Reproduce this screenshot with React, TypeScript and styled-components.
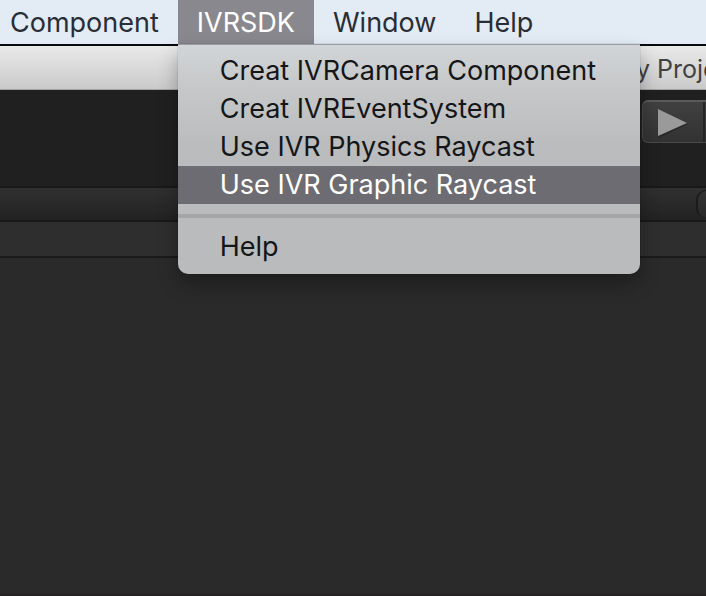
import React from "react";
import styled, { createGlobalStyle } from "styled-components";

const GlobalStyle = createGlobalStyle`
  *, *::before, *::after { box-sizing: border-box; }
  body {
    margin: 0;
    background: #2a2a2a;
    font-family: Inter, "Liberation Sans", sans-serif;
    overflow: hidden;
  }
  button { font: inherit; border: 0; margin: 0; padding: 0; background: none; }
`;

const Screen = styled.div`
  display: flex;
  flex-direction: column;
  min-height: 100vh;
  overflow: hidden;
  border-bottom: 2px solid #232122;
`;

const MenuBar = styled.nav`
  display: flex;
  height: 46px;
  background: #e3ebf4;
  border-bottom: 2px solid #08080f;
`;

const MenuSlot = styled.div`
  position: relative;
  display: flex;
`;

const MenuTitle = styled.button<{ $open?: boolean; $first?: boolean }>`
  height: 44px;
  padding: 0 19px 0 ${(p) => (p.$first ? 10 : 19)}px;
  font-size: 27px;
  line-height: 46px;
  white-space: nowrap;
  color: ${(p) => (p.$open ? "#ffffff" : "#292d35")};
  background: ${(p) => (p.$open ? "#89888e" : "transparent")};
`;

const DropDown = styled.div`
  position: absolute;
  z-index: 2;
  top: 44px;
  left: 0;
  width: 462px;
  padding: 7px 0 8px;
  border-top: 1px solid #9a9da1;
  border-radius: 0 0 10px 10px;
  background: linear-gradient(#d2d5d7 0, #c6c8ca 40px, #bbbcbe 100px, #babbbd 100%);
  box-shadow: 0 10px 20px rgba(0, 0, 0, 0.3), 0 0 1px rgba(0, 0, 0, 0.6);
`;

const MenuEntry = styled.button<{ $active?: boolean }>`
  display: block;
  width: 100%;
  height: 38px;
  padding-left: 42px;
  font-size: 27px;
  line-height: 38px;
  text-align: left;
  white-space: nowrap;
  color: ${(p) => (p.$active ? "#ffffff" : "#151618")};
  background: ${(p) => (p.$active ? "#6d6c72" : "transparent")};
`;

const Separator = styled.hr`
  height: 4px;
  margin: 10px 0;
  border: 0;
  background: #a5a6a8;
`;

const TitleBar = styled.header`
  height: 44px;
  padding-left: 636px;
  overflow: hidden;
  font-size: 25px;
  line-height: 46px;
  white-space: nowrap;
  color: #414141;
  background: linear-gradient(#e9e9e9, #cacaca);
  border-bottom: 1px solid #a2a2a2;
`;

const Toolbar = styled.div`
  display: flex;
  height: 96px;
  padding: 10px 0 0 642px;
  overflow: hidden;
  background: #202020;
`;

const PlayGroup = styled.div`
  display: flex;
  flex: none;
  height: 43px;
  border: 1px solid #4a4a4a;
  border-top: 2px solid #5b5b5b;
  border-radius: 6px;
  background: linear-gradient(#404040, #323232);
`;

const PlayButton = styled.button`
  display: flex;
  align-items: center;
  width: 62px;
  padding-left: 15px;
  border-right: 2px solid #252525;
`;

const TabStrip = styled.div`
  display: flex;
  justify-content: flex-end;
  height: 36px;
  border-top: 2px solid #181818;
  border-bottom: 2px solid #181818;
  background: linear-gradient(#303030, #222222);
  overflow: hidden;
`;

const RoundEnd = styled.div`
  width: 10px;
  height: 28px;
  margin-top: 2px;
  border-left: 2px solid #1b1b1b;
  border-top: 1px solid #1b1b1b;
  border-radius: 14px 0 0 14px;
  background: linear-gradient(#333333, #282828);
`;

const OptionsStrip = styled.div`
  height: 36px;
  border-bottom: 2px solid #1a1a1a;
  background: #2e2e2e;
`;

const Workspace = styled.main`
  flex: 1;
  background: #2a2a2a;
`;

const entries = [
  "Creat IVRCamera Component",
  "Creat IVREventSystem",
  "Use IVR Physics Raycast",
  "Use IVR Graphic Raycast",
];

export default function App() {
  return (
    <Screen>
      <GlobalStyle />
      <MenuBar aria-label="Application menu">
        <MenuSlot>
          <MenuTitle $first>Component</MenuTitle>
        </MenuSlot>
        <MenuSlot>
          <MenuTitle $open aria-haspopup="menu" aria-expanded="true">IVRSDK</MenuTitle>
          <DropDown role="menu" aria-label="IVRSDK">
            {entries.map((label) => (
              <MenuEntry key={label} role="menuitem" $active={label === "Use IVR Graphic Raycast"}>
                {label}
              </MenuEntry>
            ))}
            <Separator />
            <MenuEntry role="menuitem">Help</MenuEntry>
          </DropDown>
        </MenuSlot>
        <MenuSlot>
          <MenuTitle>Window</MenuTitle>
        </MenuSlot>
        <MenuSlot>
          <MenuTitle>Help</MenuTitle>
        </MenuSlot>
      </MenuBar>
      <TitleBar>y Project</TitleBar>
      <Toolbar>
        <PlayGroup>
          <PlayButton aria-label="Play">
            <svg width="32" height="32" viewBox="0 0 32 32" aria-hidden="true">
              <path d="M1 5 30 18 1 32Z" fill="#292929" />
              <path d="M0 3 29 17 0 30Z" fill="#9a9a9a" />
            </svg>
          </PlayButton>
          <PlayButton aria-label="Pause" />
        </PlayGroup>
      </Toolbar>
      <TabStrip>
        <RoundEnd />
      </TabStrip>
      <OptionsStrip />
      <Workspace />
    </Screen>
  );
}
